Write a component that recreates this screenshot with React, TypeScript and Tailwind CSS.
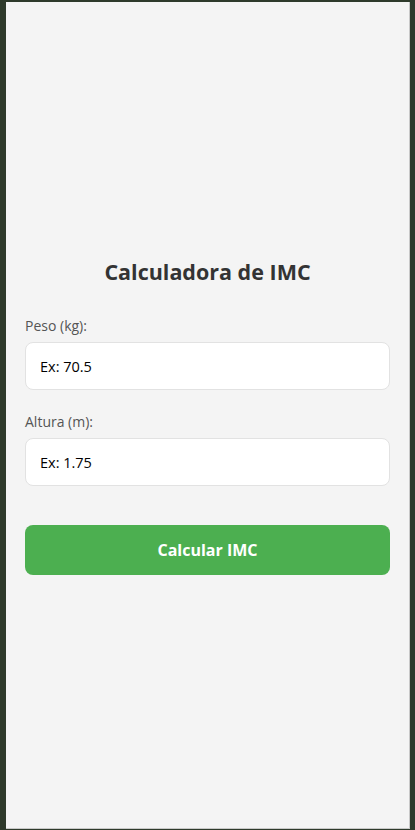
import { useState } from 'react';

function Field({ label, placeholder }: { label: string; placeholder: string }) {
  return (
    <div className="flex flex-col">
      <label className="mb-[6px] text-[14px] leading-[20px] text-[#555]">{label}</label>
      <input
        type="text"
        placeholder={placeholder}
        className="h-[48px] w-full rounded-[8px] border border-[#e2e2e2] bg-white px-[14px] text-[14.5px] text-black outline-none placeholder:text-black"
      />
    </div>
  );
}

export default function App() {
  const [result] = useState<string | null>(null);

  return (
    <div
      className="flex h-[830px] w-full bg-[#2e3a2b] pb-[1px] pl-[6px] pr-[5px] pt-[2px]"
      style={{ fontFamily: '"Open Sans", "Noto Sans", sans-serif' }}
    >
      <div className="flex flex-1 flex-col justify-center border-r border-b border-[#c8c8c8] bg-[#f4f4f4] px-[19px] pt-[3px]">
        <h1 className="mb-[30px] text-center text-[21.5px] font-bold leading-[28px] text-[#333]">
          Calculadora de IMC
        </h1>
        <div className="flex flex-col gap-[22px]">
          <Field label="Peso (kg):" placeholder="Ex: 70.5" />
          <Field label="Altura (m):" placeholder="Ex: 1.75" />
        </div>
        <button className="mt-[39px] h-[50px] w-full rounded-[8px] bg-[#4caf50] text-[16px] font-bold text-white">
          Calcular IMC
        </button>
        {result && <p className="mt-4 text-center text-[#333]">{result}</p>}
      </div>
    </div>
  );
}
